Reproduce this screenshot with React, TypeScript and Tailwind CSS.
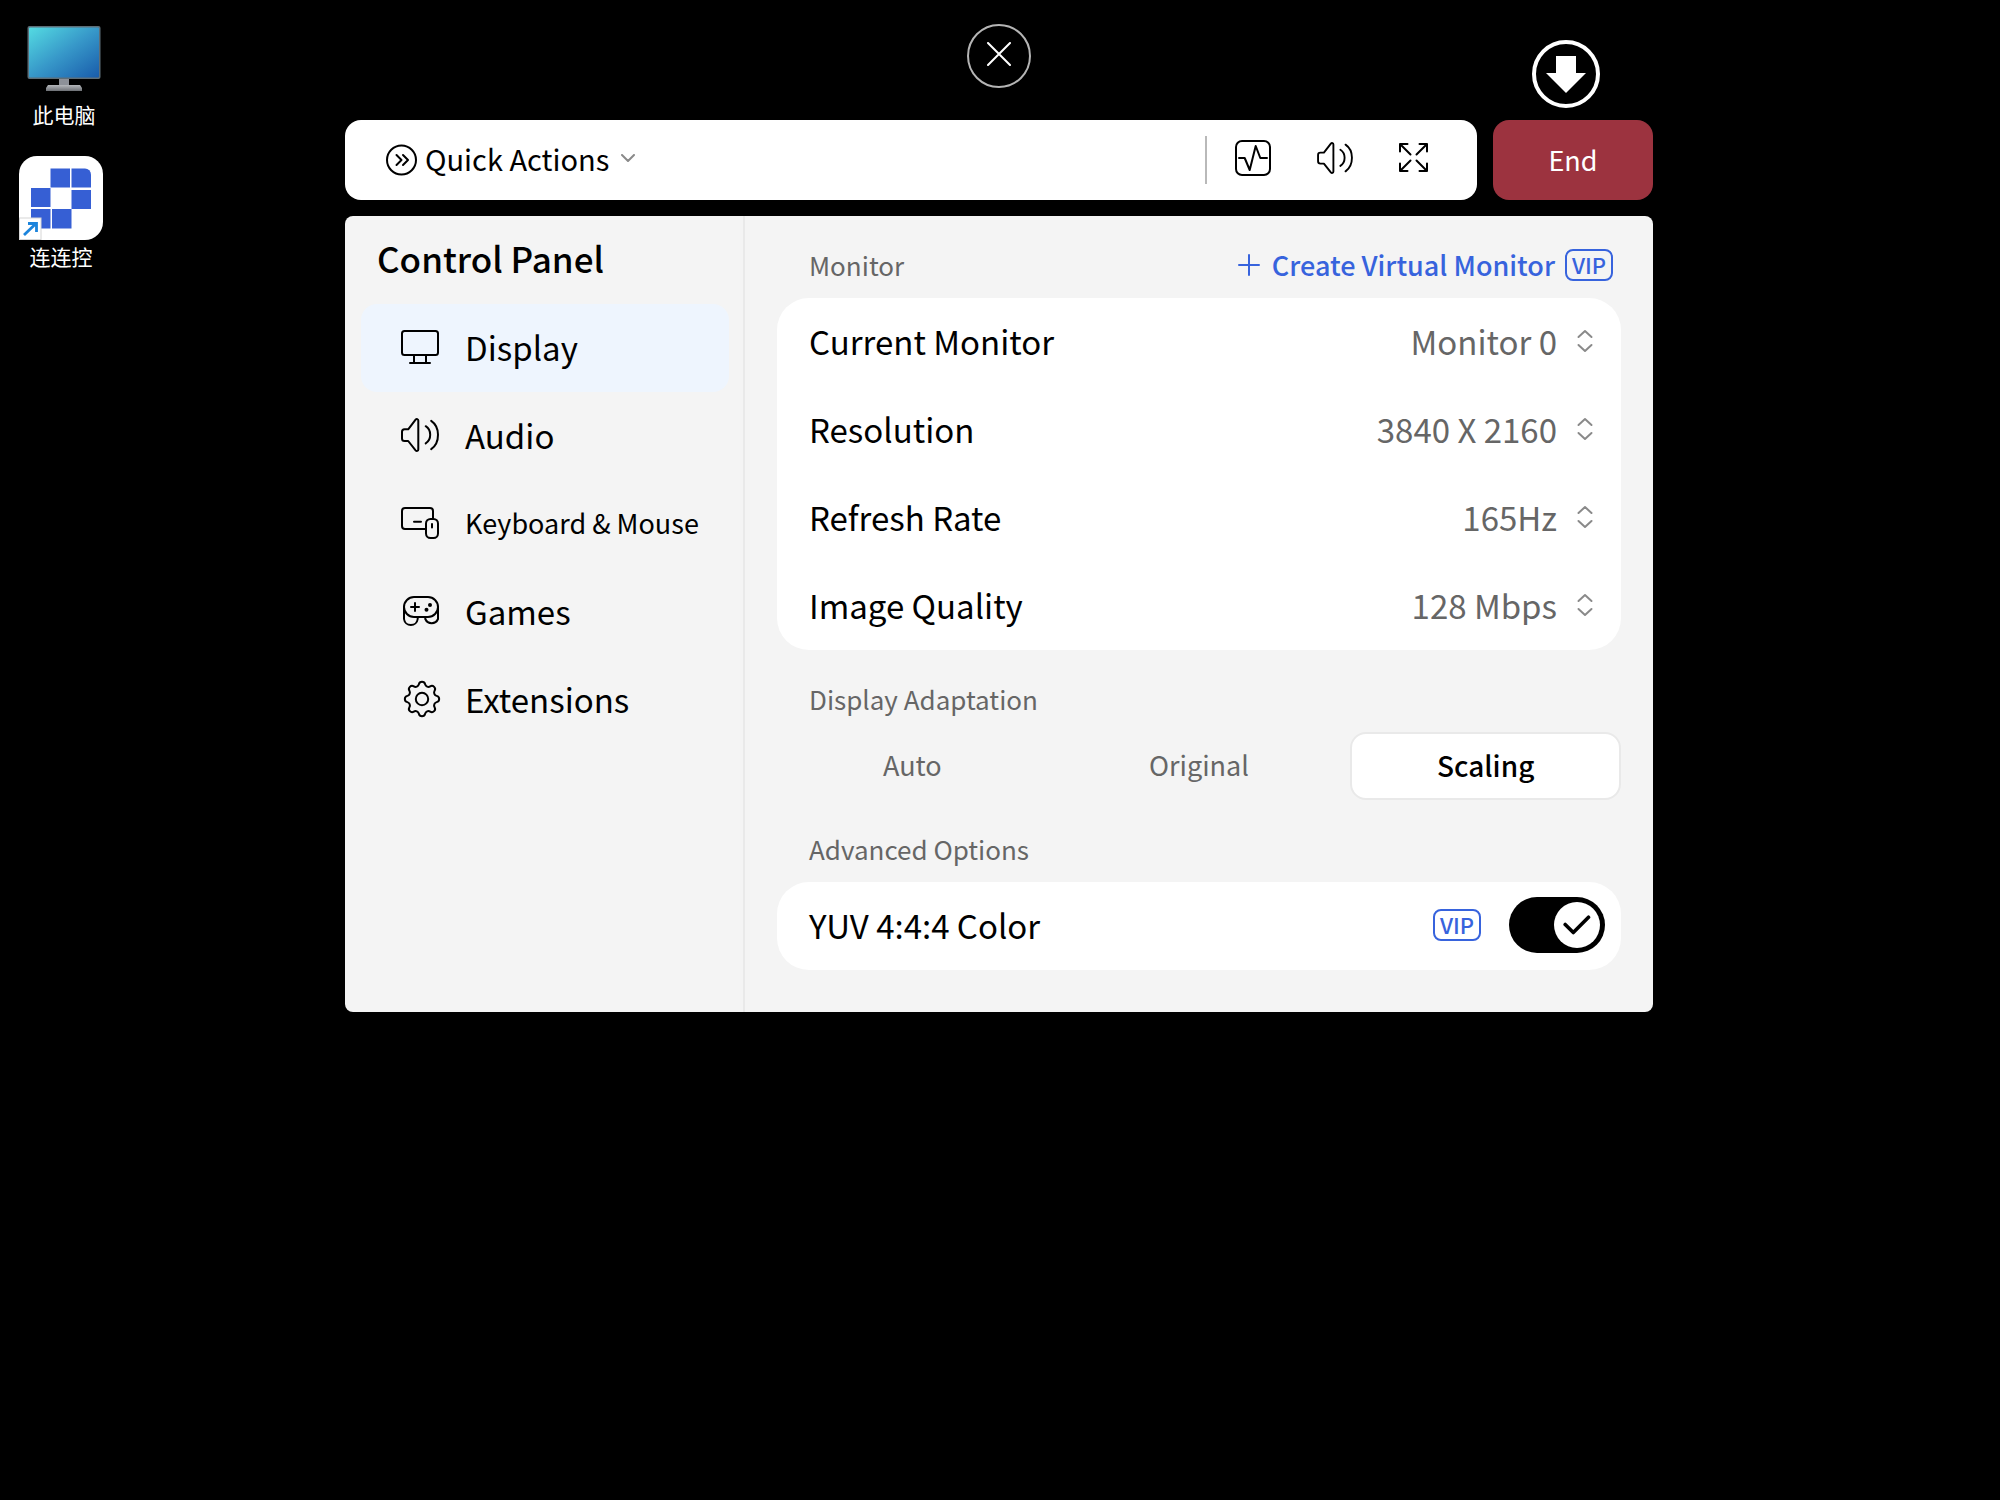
import React, { useState } from "react"

const navItems = [
  { id: "display", label: "Display", icon: <DisplayIcon /> },
  { id: "audio", label: "Audio", icon: <SpeakerIcon className="h-[34px] w-[38px]" /> },
  { id: "input", label: "Keyboard & Mouse", icon: <KeyboardIcon />, small: true },
  { id: "games", label: "Games", icon: <GamepadIcon /> },
  { id: "extensions", label: "Extensions", icon: <GearIcon /> },
]

const monitorSettings = [
  { id: "monitor", label: "Current Monitor", options: ["Monitor 0", "Monitor 1"] },
  { id: "resolution", label: "Resolution", options: ["3840 X 2160", "2560 X 1440", "1920 X 1080"] },
  { id: "refresh", label: "Refresh Rate", options: ["165Hz", "144Hz", "60Hz"] },
  { id: "quality", label: "Image Quality", options: ["128 Mbps", "64 Mbps", "32 Mbps"] },
]

const adaptations = ["Auto", "Original", "Scaling"]

interface IconProps {
  className?: string
  viewBox: string
  children: React.ReactNode
}

function Icon({ className, viewBox, children }: IconProps) {
  return (
    <svg
      className={className}
      viewBox={viewBox}
      fill="none"
      stroke="currentColor"
      strokeWidth="2"
      strokeLinecap="round"
      strokeLinejoin="round"
      aria-hidden="true"
    >
      {children}
    </svg>
  )
}

function SpeakerIcon({ className }: { className: string }) {
  return (
    <Icon className={className} viewBox="0 0 38 34">
      <path d="M3.5 11.3H7.2L14.6 1.7C15.6.5 17.3 1 17.3 2.6V31.4C17.3 33 15.6 33.5 14.6 32.3L7.2 23H3.5C2 23 1 22 1 20.5V13.8C1 12.3 2 11.3 3.5 11.3Z" />
      <path d="M24.7 8.2C27.6 10 29.2 13 29.2 16.8S27.6 23.6 24.7 25.4" />
      <path d="M30.2 2.8C34.6 5.8 37 10.8 37 16.8S34.6 28.2 30.2 31.2" />
    </Icon>
  )
}

function DisplayIcon() {
  return (
    <Icon className="h-[34px] w-[38px]" viewBox="0 0 38 34">
      <rect x="1" y="1" width="36" height="24" rx="2.5" />
      <path d="M13 25V33M25 25V33M9 33H29" />
    </Icon>
  )
}

function KeyboardIcon() {
  return (
    <Icon className="h-8 w-[38px]" viewBox="0 0 38 32">
      <path d="M24.5 22H4A3 3 0 0 1 1 19V4A3 3 0 0 1 4 1H29A3 3 0 0 1 32 4V12" />
      <rect x="25" y="12" width="12" height="19" rx="4.5" />
      <path d="M13 14.8H20M31 17V20.5" />
    </Icon>
  )
}

function GamepadIcon() {
  return (
    <Icon className="h-[31px] w-10" viewBox="-2 0 40 31">
      <rect x="1" y="1" width="34" height="20" rx="10" />
      <path d="M1 11V23A6.9 6.9 0 0 0 14.7 23V21M35 11V23A6.9 6.9 0 0 1 22.3 23V21" />
      <path d="M12 7V15M8 11H16" />
      <circle cx="27" cy="9" r="2" fill="currentColor" stroke="none" />
      <circle cx="23.5" cy="13.7" r="2" fill="currentColor" stroke="none" />
    </Icon>
  )
}

// eight rounded teeth joined by shallow valleys
function gearPath() {
  const point = (deg: number, r: number) => {
    const a = (deg * Math.PI) / 180
    return `${(19 + r * Math.cos(a)).toFixed(2)} ${(19 + r * Math.sin(a)).toFixed(2)}`
  }
  let d = `M${point(-12, 15)}`
  for (let i = 0; i < 8; i++) {
    const deg = i * 45
    d += `A3.2 3.2 0 0 1 ${point(deg + 12, 15)}`
    d += `A3.4 3.4 0 0 0 ${point(deg + 33, 15)}`
  }
  return d + "Z"
}

function GearIcon() {
  return (
    <Icon className="h-[38px] w-10" viewBox="-2 0 40 38">
      <path d={gearPath()} />
      <circle cx="19" cy="19" r="6.2" />
    </Icon>
  )
}

function UpDownIcon() {
  return (
    <Icon
      className="pointer-events-none absolute right-0 h-[24px] w-4 text-[#8a8a8a]"
      viewBox="0 0 16 24"
    >
      <path d="M1.5 8L8 2L14.5 8M1.5 16L8 22L14.5 16" />
    </Icon>
  )
}

function VipBadge() {
  return (
    <span className="flex h-8 w-12 items-center justify-center rounded-lg border-2 border-[#3763dd] pb-0.5 text-[22px] leading-7 font-medium text-[#3763dd]">
      VIP
    </span>
  )
}

function DesktopIcons() {
  return (
    <div className="absolute top-6 left-[19px] flex flex-col gap-7 text-[21px] leading-7 text-white">
      <a href="#computer" className="flex flex-col items-center gap-2 pl-1.5">
        <svg className="h-[68px] w-[74px]" viewBox="0 0 74 68" aria-hidden="true">
          <defs>
            <linearGradient id="screen" x1="0" y1="0" x2="1" y2="1">
              <stop offset="0" stopColor="#54dbe2" />
              <stop offset="0.5" stopColor="#3798c9" />
              <stop offset="1" stopColor="#195cab" />
            </linearGradient>
            <linearGradient id="stand" x1="0" y1="0" x2="0" y2="1">
              <stop offset="0" stopColor="#b4b7bb" />
              <stop offset="1" stopColor="#6d7075" />
            </linearGradient>
          </defs>
          <path d="M32 54H42V62H32Z" fill="#8d9198" />
          <path d="M21 61H53L55 64V67H19V64Z" fill="url(#stand)" />
          <rect x="0.5" y="2" width="73" height="53" rx="2" fill="#5d6e78" />
          <rect x="2" y="3.5" width="70" height="50" rx="1" fill="url(#screen)" />
        </svg>
        此电脑
      </a>
      <a href="#lianliankong" className="flex flex-col items-center gap-0.5">
        <svg className="h-[84px] w-[84px]" viewBox="0 0 84 84" aria-hidden="true">
          <path d="M18 0H66A18 18 0 0 1 84 18V66A18 18 0 0 1 66 84H0V18A18 18 0 0 1 18 0Z" fill="#fff" />
          <g fill="#365fd4">
            <rect x="31.5" y="12.5" width="19.5" height="19" />
            <path d="M52.5 12.5H66A6 6 0 0 1 72 18.5V31.5H52.5Z" />
            <rect x="12" y="32" width="19.5" height="19" />
            <rect x="52.5" y="34" width="19.5" height="19" />
            <rect x="12" y="53" width="19.5" height="19.5" />
            <rect x="33" y="53" width="19.5" height="19.5" />
          </g>
          <rect x="0.5" y="62" width="21.5" height="21.5" fill="#fff" stroke="#d6d6d6" />
          <path d="M5 79L17 67.5M9 67.5H17.5V76" fill="none" stroke="#1c84dc" strokeWidth="2.8" />
        </svg>
        连连控
      </a>
    </div>
  )
}

function Toolbar() {
  return (
    <div className="flex gap-4">
      <div className="flex h-20 flex-1 items-center rounded-2xl bg-white pr-12 pl-10">
        <button className="flex items-center pb-1 text-[29px] leading-10">
          <Icon className="mt-1 mr-2 h-8 w-8" viewBox="0 0 32 32">
            <circle cx="16.5" cy="16" r="14.5" />
            <path d="M11.5 11L16.5 16L11.5 21M18 11L23 16L18 21" />
          </Icon>
          Quick Actions
          <Icon className="ml-3 h-2 w-[14px] text-[#8a8a8a]" viewBox="0 0 14 8">
            <path d="M1 1L7 7L13 1" />
          </Icon>
        </button>
        <div className="ml-auto h-12 w-0.5 bg-[#b9b9b9]" />
        <button aria-label="Performance" className="ml-7 pb-1">
          <Icon className="h-9 w-9" viewBox="0 0 36 36">
            <rect x="1" y="1" width="34" height="34" rx="6" />
            <path d="M4 18H9.7L14.7 30L20.7 6L25.3 18H32" />
          </Icon>
        </button>
        <button aria-label="Volume" className="ml-[46px] pb-1">
          <SpeakerIcon className="h-8 w-9" />
        </button>
        <button aria-label="Fullscreen" className="ml-[46px] pb-1">
          <Icon className="h-[30px] w-[30px]" viewBox="0 0 30 30">
            <path d="M1 8.5V1H8.5M20.5 1H28V8.5M28 20.5V28H20.5M8.5 28H1V20.5" />
            <path d="M1.5 1.5L11.5 11.5M27.5 1.5L17.5 11.5M27.5 27.5L17.5 17.5M1.5 27.5L11.5 17.5" />
          </Icon>
        </button>
      </div>
      <button className="h-20 w-40 rounded-2xl bg-[#9c333f] text-[27px] leading-10 text-white">End</button>
    </div>
  )
}

function Sidebar() {
  const [active, setActive] = useState("display")

  return (
    <nav className="w-[400px] shrink-0 border-r-2 border-[#e9e9e9] pr-3.5 pl-4">
      <h1 className="px-4 pt-[18px] pb-[22px] text-[35px] leading-[48px] font-medium">Control Panel</h1>
      {navItems.map((item) => (
        <button
          key={item.id}
          onClick={() => setActive(item.id)}
          className={`flex h-[88px] w-full items-center gap-6 rounded-2xl pb-0.5 pl-10 text-left leading-10
            ${item.small ? "text-[27px]" : "text-[33px]"}
            ${active === item.id ? "bg-[#eef5fe]" : ""}
          `}
        >
          <span className="w-10">{item.icon}</span>
          {item.label}
        </button>
      ))}
    </nav>
  )
}

function SettingSelect({ id, label, options }: { id: string; label: string; options: string[] }) {
  return (
    <div className="flex h-[88px] items-center justify-between pr-7 pb-0.5 pl-8">
      <label htmlFor={id}>{label}</label>
      <div className="relative flex items-center text-[#666]">
        <select id={id} className="w-64 appearance-none bg-transparent pr-9 leading-10 [text-align-last:right]">
          {options.map((option) => (
            <option key={option}>{option}</option>
          ))}
        </select>
        <UpDownIcon />
      </div>
    </div>
  )
}

function DisplaySettings() {
  const [mode, setMode] = useState("Scaling")
  const [yuv, setYuv] = useState(true)

  return (
    <section className="flex-1 px-8 pb-[42px] text-[33px] leading-10">
      <div className="flex items-center justify-between pt-[30px] pr-2 pb-3.5 pl-8">
        <h2 className="text-[26px] leading-[38px] text-[#666]">Monitor</h2>
        <button className="flex items-center text-[27px] leading-[38px] font-medium text-[#3763dd]">
          <Icon className="mr-3 h-[22px] w-[22px]" viewBox="0 0 22 22">
            <path d="M11 1V21M1 11H21" />
          </Icon>
          <span className="mr-2.5">Create Virtual Monitor</span>
          <VipBadge />
        </button>
      </div>
      <div className="rounded-[32px] bg-white">
        {monitorSettings.map((setting) => (
          <SettingSelect key={setting.id} {...setting} />
        ))}
      </div>

      <h2 className="pt-[30px] pb-3.5 pl-8 text-[26px] leading-[38px] text-[#666]">Display Adaptation</h2>
      <div className="grid grid-cols-3 gap-4">
        {adaptations.map((name) => (
          <button
            key={name}
            onClick={() => setMode(name)}
            className={`h-[68px] rounded-2xl border-2 pb-0.5 leading-10
              ${mode === name ? "border-[#e9e9e9] bg-white text-[28px] font-medium" : "border-transparent text-[27px] text-[#666]"}
            `}
          >
            {name}
          </button>
        ))}
      </div>

      <h2 className="pt-[30px] pb-3.5 pl-8 text-[26px] leading-[38px] text-[#666]">Advanced Options</h2>
      <div className="flex h-[88px] items-center rounded-[32px] bg-white pr-4 pb-0.5 pl-8">
        <label htmlFor="yuv" className="mr-auto">
          YUV 4:4:4 Color
        </label>
        <VipBadge />
        <span className="relative ml-7 flex h-14 w-24">
          <input
            id="yuv"
            type="checkbox"
            role="switch"
            checked={yuv}
            onChange={() => setYuv(!yuv)}
            className="h-14 w-24 cursor-pointer appearance-none rounded-full bg-gray-300 checked:bg-black"
          />
          <span
            className={`pointer-events-none absolute top-[5px] flex h-[46px] w-[46px] items-center justify-center rounded-full bg-white
              ${yuv ? "right-[5px]" : "left-[5px]"}
            `}
          >
            <svg className="h-5 w-7" viewBox="0 0 28 20" fill="none" stroke="#000" strokeWidth="3.6" strokeLinecap="round" strokeLinejoin="round">
              <path d="M2.2 9.5L10.3 17.5L25.5 2.2" />
            </svg>
          </span>
        </span>
      </div>
    </section>
  )
}

export default function App() {
  return (
    <div className="relative min-h-screen bg-black pr-0.5 font-['Noto_Sans_CJK_SC',sans-serif] text-black">
      <DesktopIcons />
      <main className="mx-auto w-full max-w-[1308px]">
        <header className="grid h-[120px] grid-cols-3 items-start pt-6">
          <button
            aria-label="Close"
            className="col-start-2 flex h-16 w-16 items-center justify-center justify-self-center rounded-full border-2 border-[#b5b5b5] pb-1 text-white"
          >
            <Icon className="h-6 w-6" viewBox="0 0 24 24">
              <path d="M1 1L23 23M23 1L1 23" />
            </Icon>
          </button>
          <button
            aria-label="Drop down toolbar"
            className="mt-4 mr-[53px] flex h-[68px] w-[68px] items-center justify-center justify-self-end rounded-full border-4 border-white text-white"
          >
            <svg className="h-[37px] w-10" viewBox="0 0 40 37" fill="currentColor">
              <path d="M10 0H30V17H40L20 37L0 17H10Z" />
            </svg>
          </button>
        </header>
        <Toolbar />
        <div className="mt-4 flex rounded-lg bg-[#f4f4f4]">
          <Sidebar />
          <DisplaySettings />
        </div>
      </main>
    </div>
  )
}
